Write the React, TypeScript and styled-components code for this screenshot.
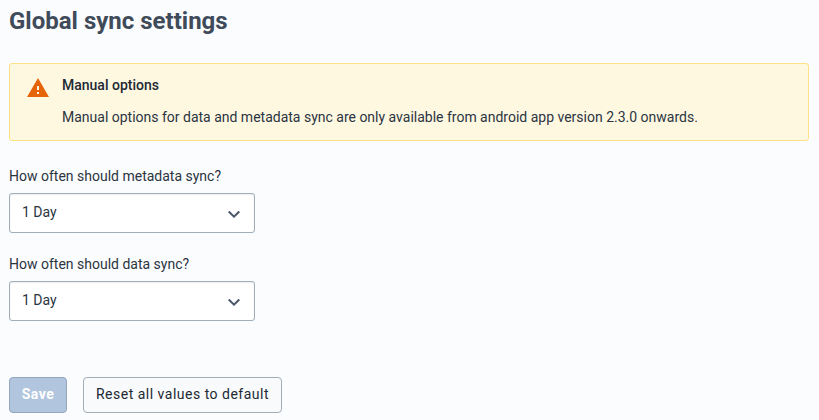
import React from "react";
import styled, { createGlobalStyle } from "styled-components";

const GlobalStyle = createGlobalStyle`
  * { box-sizing: border-box; }
  body { margin: 0; background: #fbfcfe; font-family: Roboto, sans-serif; color: #212934; }
`;
const Page = styled.main`
  height: 420px; padding: 7px 10px 7px 9px; display: flex; flex-direction: column; align-items: flex-start; overflow: hidden;
`;
const Title = styled.h1`
  margin: 0 0 28px; font-size: 24px; line-height: 28px; font-weight: 700; color: #404b5a;
`;
const Notice = styled.section`
  align-self: stretch; height: 78px; display: flex; gap: 12px; padding: 12px 16px 0; margin-bottom: 26px;
  background: #fff8e1; border: 1px solid #ffe082; border-radius: 3px;
`;
const NoticeTitle = styled.h2`
  margin: 0 0 14px; font-size: 14px; line-height: 18px; font-weight: 500;
`;
const NoticeText = styled.p`
  margin: 0; font-size: 14px; line-height: 18px; letter-spacing: -0.004px; color: #2b3441;
`;
const Field = styled.div`
  display: flex; flex-direction: column; height: 88px; width: 246px;
`;
const Label = styled.label`
  font-size: 14px; line-height: 18px; margin-bottom: 8px; white-space: nowrap; color: #2b3441;
`;
const Select = styled.div`
  height: 40px; display: flex; align-items: center; justify-content: space-between; padding: 0 11px 0 12px;
  border: 1px solid #a0adba; border-radius: 3px; background: #fff; font-size: 14px; box-shadow: inset 0 1px 2px rgba(48,54,60,.1);
`;
const Value = styled.span`
  padding-bottom: 2px; line-height: 18px; color: #2b3441;
`;
const Actions = styled.div`
  display: flex; gap: 16px; margin-top: 34px;
`;
const Button = styled.button<{ $primary?: boolean }>`
  height: 36px; width: ${(p) => (p.$primary ? "58px" : "199px")}; padding: 0 0 2px; border-radius: 4px; white-space: nowrap;
  border: 1px solid ${(p) => (p.$primary ? "#93a6bd" : "#a0adba")};
  background: ${(p) => (p.$primary ? "#b2c5de" : "#f9fafb")};
  color: ${(p) => (p.$primary ? "#fff" : "#212934")};
  font: ${(p) => (p.$primary ? 700 : 400)} 14px/16px Roboto, sans-serif; letter-spacing: 0.5px;
`;

const Warning = () => (
  <svg width="24" height="24" viewBox="0 0 24 24"><path fill="#e56408" d="M1 21h22L12 2 1 21zm12-3h-2v-2h2v2zm0-4h-2v-4h2v4z" /></svg>
);
const Chevron = () => (
  <svg width="18" height="18" viewBox="0 0 18 18"><path d="M3.7 7.5L9 12.7l5.3-5.2" fill="none" stroke="#4a5768" strokeWidth="2" /></svg>
);
const SelectField = ({ label, value }: { label: string; value: string }) => (
  <Field>
    <Label>{label}</Label>
    <Select><Value>{value}</Value><Chevron /></Select>
  </Field>
);

export default function App() {
  return (
    <>
      <GlobalStyle />
      <Page>
        <Title>Global sync settings</Title>
        <Notice>
          <Warning />
          <div>
            <NoticeTitle>Manual options</NoticeTitle>
            <NoticeText>Manual options for data and metadata sync are only available from android app version 2.3.0 onwards.</NoticeText>
          </div>
        </Notice>
        <SelectField label="How often should metadata sync?" value="1 Day" />
        <SelectField label="How often should data sync?" value="1 Day" />
        <Actions>
          <Button $primary disabled>Save</Button>
          <Button>Reset all values to default</Button>
        </Actions>
      </Page>
    </>
  );
}
